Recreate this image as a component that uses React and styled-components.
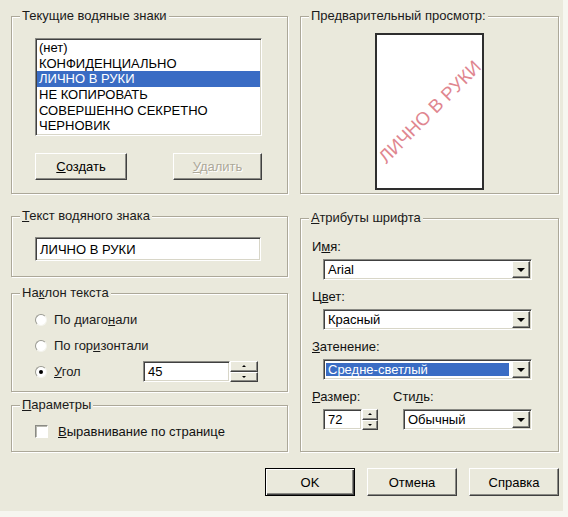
import React from 'react';
import styled, { createGlobalStyle } from 'styled-components';

const BG = '#eae9dc';

const GlobalStyle = createGlobalStyle`
  html, body {
    margin: 0;
    padding: 0;
    background: #f6f6f0;
  }
  body {
    font-family: "Liberation Sans", Arial, sans-serif;
    font-size: 13px;
    color: #111;
  }
`;

const Dialog = styled.div`
  width: 563px;
  height: 511px;
  box-sizing: border-box;
  background: ${BG};
  padding: 16px 0 0 11px;
`;

const Columns = styled.div`
  display: grid;
  grid-template-columns: 277px 259px;
  grid-template-rows: 178px auto;
  column-gap: 12px;
  row-gap: 22px;
`;

const Stack = styled.div`
  display: flex;
  flex-direction: column;
  gap: ${(p) => p.$gap || 0}px;
`;

const Group = styled.div`
  display: flex;
  flex-direction: column;
  box-sizing: border-box;
  border: 1px solid #aca899;
  box-shadow: inset 1px 1px 0 #fff, 1px 1px 0 #fff;
  padding: ${(p) => p.$pad || '0'};
  margin-top: ${(p) => p.$mt || 0}px;
`;

const Title = styled.div`
  align-self: flex-start;
  margin: -9px 0 0 8px;
  padding: 0 2px;
  line-height: 15px;
  background: ${BG};
  color: #1a1a1a;
`;

const Key = styled.span`
  text-decoration: underline;
`;

const sunken = `
  border: 1px solid;
  border-color: #8a8a84 #fff #fff #8a8a84;
  box-shadow: inset 1px 1px 0 #404040, inset -1px -1px 0 #d8d6c8;
  background: #fff;
  box-sizing: border-box;
`;

const raised = `
  border: 1px solid;
  border-color: #fff #404040 #404040 #fff;
  box-shadow: inset -1px -1px 0 #8a8a84;
  background: ${BG};
  box-sizing: border-box;
`;

const ListBox = styled.div`
  ${sunken}
  margin: 15px 0 0 23px;
  width: 227px;
  height: 98px;
  padding: 1px;
`;

const ListItem = styled.div`
  height: 15.7px;
  line-height: 15.7px;
  padding-left: 2px;
  white-space: nowrap;
  background: ${(p) => (p.$selected ? '#3a6cc4' : 'transparent')};
  color: ${(p) => (p.$selected ? '#fff' : '#000')};
`;

const ButtonRow = styled.div`
  display: flex;
  justify-content: ${(p) => p.$justify || 'space-between'};
  gap: ${(p) => p.$gap || 0}px;
  margin: ${(p) => p.$margin || '0'};
  width: ${(p) => (p.$w ? `${p.$w}px` : 'auto')};
`;

const Button = styled.button`
  ${raised}
  width: ${(p) => p.$w}px;
  height: ${(p) => p.$h || 28}px;
  font: inherit;
  padding: 0;
  color: ${(p) => (p.disabled ? '#aca899' : '#000')};
  text-shadow: ${(p) => (p.disabled ? '1px 1px 0 #fff' : 'none')};
  ${(p) =>
    p.$default &&
    `
    border: 1px solid #000;
    box-shadow: inset 1px 1px 0 #fff, inset -1px -1px 0 #404040, inset -2px -2px 0 #8a8a84;
  `}
`;

const Page = styled.div`
  align-self: center;
  margin-top: 10px;
  width: 109px;
  height: 157px;
  box-sizing: border-box;
  border: 2px solid #2e2e2e;
  background: #fff;
  display: flex;
  align-items: center;
  justify-content: center;
  overflow: hidden;
`;

const PreviewText = styled.span`
  transform: rotate(-45deg);
  color: #e0868f;
  font-size: 18.5px;
  white-space: nowrap;
`;

const TextBox = styled.div`
  ${sunken}
  width: ${(p) => p.$w}px;
  height: ${(p) => p.$h || 21}px;
  margin: ${(p) => p.$margin || '0'};
  display: flex;
  align-items: center;
  padding-left: 4px;
  color: #000;
`;

const RadioRow = styled.div`
  display: flex;
  align-items: center;
  height: 21px;
  margin-top: ${(p) => p.$mt || 0}px;
  padding-left: 23px;
`;

const Radio = styled.span`
  width: 12px;
  height: 12px;
  box-sizing: border-box;
  border-radius: 50%;
  border: 1px solid;
  border-color: #9a9a92 #f4f4ee #f4f4ee #9a9a92;
  background: #fff;
  display: inline-flex;
  align-items: center;
  justify-content: center;

  &::after {
    content: '';
    width: 4px;
    height: 4px;
    border-radius: 50%;
    background: ${(p) => (p.$checked ? '#000' : 'transparent')};
  }
`;

const OptionLabel = styled.span`
  margin-left: 7px;
  flex: 0 0 ${(p) => (p.$w ? `${p.$w}px` : 'auto')};
  color: #1a1a1a;
`;

const Spin = styled.div`
  display: flex;
  flex-direction: column;
  width: ${(p) => p.$w}px;
  height: ${(p) => p.$h || 21}px;
`;

const SpinHalf = styled.div`
  ${raised}
  flex: 1;
  display: flex;
  align-items: center;
  justify-content: center;

  &::after {
    content: '';
    border-left: 2px solid transparent;
    border-right: 2px solid transparent;
    ${(p) => (p.$down ? 'border-top: 2px solid #000;' : 'border-bottom: 2px solid #000;')}
  }
`;

const CheckRow = styled.div`
  display: flex;
  align-items: center;
  height: 15px;
  margin-top: 12px;
  padding-left: 23px;
`;

const CheckBox = styled.span`
  ${sunken}
  width: 13px;
  height: 13px;
  box-shadow: inset 1px 1px 0 #b8b8b0;
`;

const CheckLabel = styled.span`
  margin-left: 10px;
`;

const FieldLabel = styled.div`
  line-height: 15px;
  margin: ${(p) => p.$mt || 0}px 0 0 ${(p) => (p.$ml === undefined ? 11 : p.$ml)}px;
`;

const Combo = styled.div`
  ${sunken}
  display: flex;
  width: ${(p) => p.$w}px;
  height: 21px;
  padding: 1px;
  margin: 5px 0 0 ${(p) => p.$ml || 0}px;
`;

const ComboText = styled.div`
  flex: 1;
  display: flex;
  align-items: center;
  margin: ${(p) => (p.$selected ? '2px 3px 2px 1px' : '0')};
  padding-left: ${(p) => (p.$selected ? 2 : 3)}px;
  background: ${(p) => (p.$selected ? '#3a6cc4' : 'transparent')};
  color: ${(p) => (p.$selected ? '#fff' : '#000')};
  white-space: nowrap;
`;

const DropButton = styled.div`
  ${raised}
  width: 18px;
  display: flex;
  align-items: center;
  justify-content: center;

  &::after {
    content: '';
    border-left: 4px solid transparent;
    border-right: 4px solid transparent;
    border-top: 4px solid #000;
  }
`;

const FieldRow = styled.div`
  display: flex;
  margin-top: 9px;
`;

const FieldCol = styled.div`
  display: flex;
  flex-direction: column;
  flex: 0 0 ${(p) => (p.$w ? `${p.$w}px` : 'auto')};
`;

const Inline = styled.div`
  display: flex;
  margin: 5px 0 0 ${(p) => p.$ml || 0}px;
`;

const watermarks = [
  '(нет)',
  'КОНФИДЕНЦИАЛЬНО',
  'ЛИЧНО В РУКИ',
  'НЕ КОПИРОВАТЬ',
  'СОВЕРШЕННО СЕКРЕТНО',
  'ЧЕРНОВИК',
];

const SpinButtons = ({ w, h }) => (
  <Spin $w={w} $h={h}>
    <SpinHalf />
    <SpinHalf $down />
  </Spin>
);

const ComboBox = ({ value, w, ml, selected }) => (
  <Combo $w={w} $ml={ml}>
    <ComboText $selected={selected}>{value}</ComboText>
    <DropButton />
  </Combo>
);

export default function App() {
  return (
    <>
      <GlobalStyle />
      <Dialog>
        <Columns>
          <Group>
            <Title>
              Текущие во<Key>д</Key>яные знаки
            </Title>
            <ListBox>
              {watermarks.map((item) => (
                <ListItem key={item} $selected={item === 'ЛИЧНО В РУКИ'}>
                  {item}
                </ListItem>
              ))}
            </ListBox>
            <ButtonRow $margin="17px 0 0 23px" $w={227}>
              <Button $w={92} $h={27}>
                <Key>С</Key>оздать
              </Button>
              <Button $w={89} $h={27} disabled>
                <Key>У</Key>далить
              </Button>
            </ButtonRow>
          </Group>

          <Group>
            <Title>Предварительный просмотр:</Title>
            <Page>
              <PreviewText>ЛИЧНО В РУКИ</PreviewText>
            </Page>
          </Group>

          <Stack $gap={16}>
            <Group $pad="0 0 15px 0">
              <Title>
                <Key>Т</Key>екст водяного знака
              </Title>
              <TextBox $w={226} $h={24} $margin="14px 0 0 23px">
                ЛИЧНО В РУКИ
              </TextBox>
            </Group>

            <Group $pad="0 0 9px 0">
              <Title>
                На<Key>к</Key>лон текста
              </Title>
              <RadioRow $mt={9}>
                <Radio />
                <OptionLabel>
                  По диаго<Key>н</Key>али
                </OptionLabel>
              </RadioRow>
              <RadioRow $mt={5}>
                <Radio />
                <OptionLabel>
                  По гор<Key>и</Key>зонтали
                </OptionLabel>
              </RadioRow>
              <RadioRow $mt={5}>
                <Radio $checked />
                <OptionLabel $w={89}>
                  <Key>У</Key>гол
                </OptionLabel>
                <TextBox $w={87}>45</TextBox>
                <SpinButtons w={28} h={21} />
              </RadioRow>
            </Group>

            <Group $pad="0 0 12px 0" $mt={-3}>
              <Title>
                <Key>П</Key>араметры
              </Title>
              <CheckRow>
                <CheckBox />
                <CheckLabel>
                  <Key>В</Key>ыравнивание по странице
                </CheckLabel>
              </CheckRow>
            </Group>
          </Stack>

          <Group $mt={2}>
            <Title>
              <Key>А</Key>трибуты шрифта
            </Title>
            <FieldLabel $mt={14}>
              И<Key>м</Key>я:
            </FieldLabel>
            <ComboBox value="Arial" w={209} ml={22} />
            <FieldLabel $mt={9}>
              Ц<Key>в</Key>ет:
            </FieldLabel>
            <ComboBox value="Красный" w={209} ml={22} />
            <FieldLabel $mt={9}>
              <Key>З</Key>атенение:
            </FieldLabel>
            <ComboBox value="Средне-светлый" w={209} ml={22} selected />
            <FieldRow>
              <FieldCol $w={92}>
                <FieldLabel>
                  <Key>Р</Key>азмер:
                </FieldLabel>
                <Inline $ml={22}>
                  <TextBox $w={39}>72</TextBox>
                  <SpinButtons w={16} h={21} />
                </Inline>
              </FieldCol>
              <FieldCol>
                <FieldLabel $ml={0}>
                  Сти<Key>л</Key>ь:
                </FieldLabel>
                <ComboBox value="Обычный" w={129} ml={10} />
              </FieldCol>
            </FieldRow>
          </Group>
        </Columns>

        <ButtonRow $justify="flex-end" $gap={12} $margin="16px 0 0 0" $w={548}>
          <Button $w={90} $default>
            OK
          </Button>
          <Button $w={90}>Отмена</Button>
          <Button $w={90}>Справка</Button>
        </ButtonRow>
      </Dialog>
    </>
  );
}
